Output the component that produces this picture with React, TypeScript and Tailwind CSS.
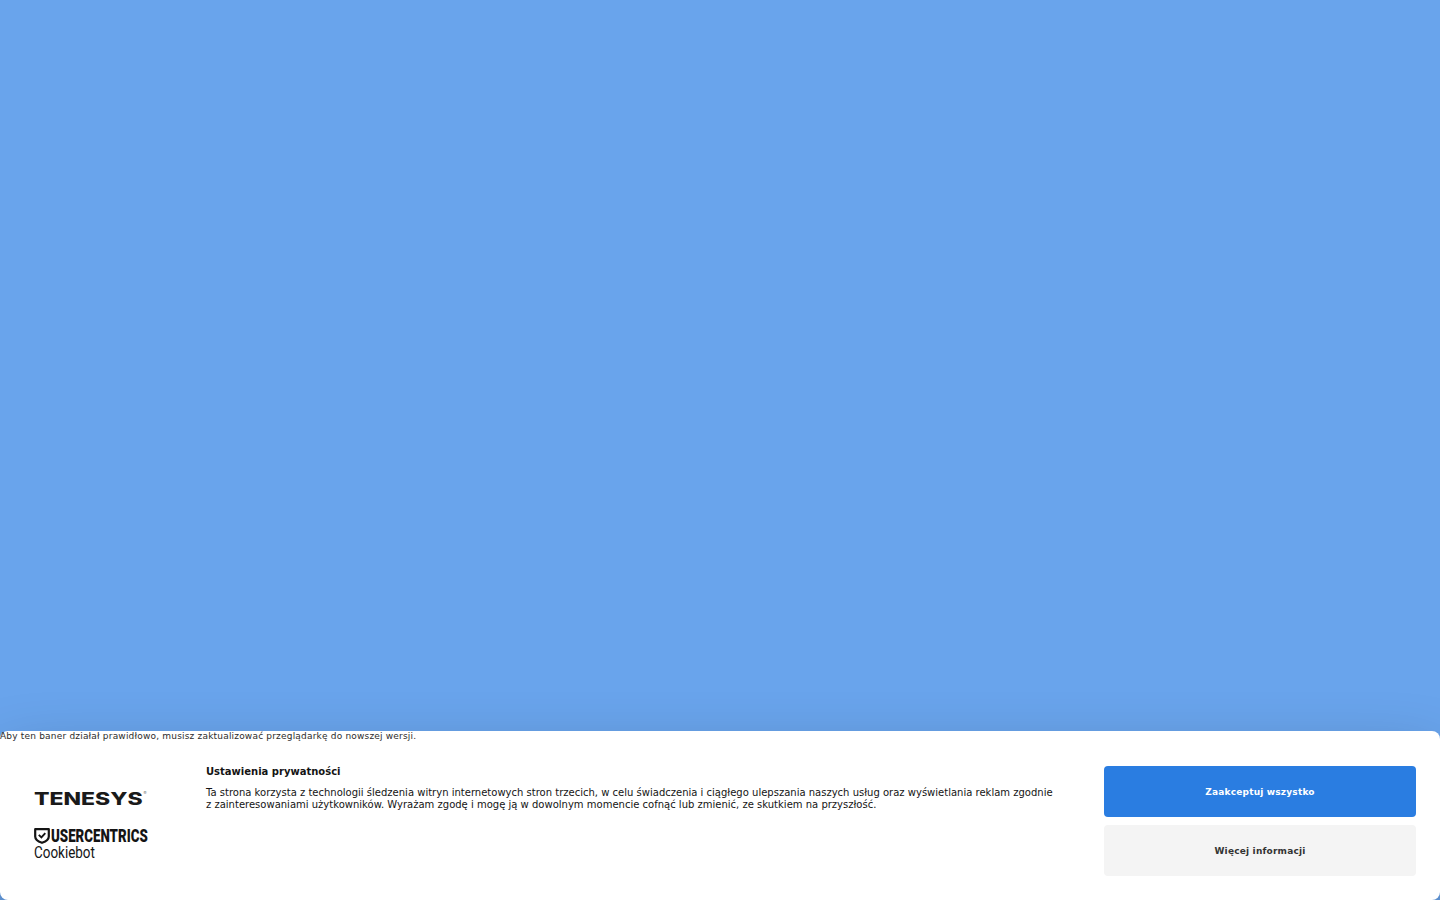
export default function App() {
  return (
    <div className="h-[900px] overflow-hidden flex flex-col justify-end bg-[#69a4ec] font-['DejaVu_Sans',sans-serif]">
      <div className="h-[169px] bg-white rounded-[8px] shadow-[0_32px_68px_rgba(0,0,0,0.3)] flex flex-col">
        <div className="text-[9px] leading-[10px] tracking-[0.19px] text-[#2c2c2c]">
          Aby ten baner działał prawidłowo, musisz zaktualizować przeglądarkę do nowszej wersji.
        </div>
        <div className="flex flex-1 pl-[34px] pr-[24px] pt-[25px]">
          <div className="w-[172px] shrink-0 pt-[25px]">
            <div className="h-[16px] flex items-start">
              <span className="w-[109px] shrink-0 text-[17px] leading-[16px] font-extrabold text-[#1a1a1a] font-['Inter',sans-serif] origin-left scale-x-[1.35] inline-block">TENESYS</span>
              <span className="text-[4px] leading-[4px] text-[#555]">®</span>
            </div>
            <div className="flex items-center mt-[21px] h-[16px]">
              <svg width="16" height="16" viewBox="0 0 16 16" className="shrink-0">
                <path d="M1.2 1.2h13.6v7.3c0 3.2-3 5-6.8 6.3-3.8-1.3-6.8-3.1-6.8-6.3z" fill="none" stroke="#141414" strokeWidth="2.2" strokeLinejoin="round" />
                <path d="M4.8 6.8l2.6 2.6 3.9-4.2" fill="none" stroke="#141414" strokeWidth="1.9" />
              </svg>
              <span className="ml-px text-[19px] leading-[16px] font-black text-[#141414] font-['Roboto',sans-serif] origin-left scale-x-[0.7] inline-block whitespace-nowrap">USERCENTRICS</span>
            </div>
            <div className="text-[16px] leading-[14px] text-[#141414] font-['Roboto',sans-serif] origin-left scale-x-[0.84] mt-[2px]">Cookiebot</div>
          </div>
          <div className="w-[848px] shrink-0">
            <div className="text-[10px] leading-[12px] font-bold text-[#141414]">Ustawienia prywatności</div>
            <p className="text-[10px] leading-[12px] tracking-[0.007px] text-[#141414] mt-[9px]">
              Ta strona korzysta z technologii śledzenia witryn internetowych stron trzecich, w celu świadczenia i ciągłego ulepszania naszych usług oraz wyświetlania reklam zgodnie z zainteresowaniami użytkowników. Wyrażam zgodę i mogę ją w dowolnym momencie cofnąć lub zmienić, ze skutkiem na przyszłość.
            </p>
          </div>
          <div className="ml-auto w-[312px] flex flex-col gap-[8px]">
            <button className="h-[51px] pt-[2px] rounded-[4px] bg-[#2a7de1] text-white text-[9px] font-bold tracking-[0.19px]">Zaakceptuj wszystko</button>
            <button className="h-[51px] pt-[2px] rounded-[4px] bg-[#f4f4f4] text-[#333] text-[9px] font-bold tracking-[0.19px]">Więcej informacji</button>
          </div>
        </div>
      </div>
    </div>
  );
}
